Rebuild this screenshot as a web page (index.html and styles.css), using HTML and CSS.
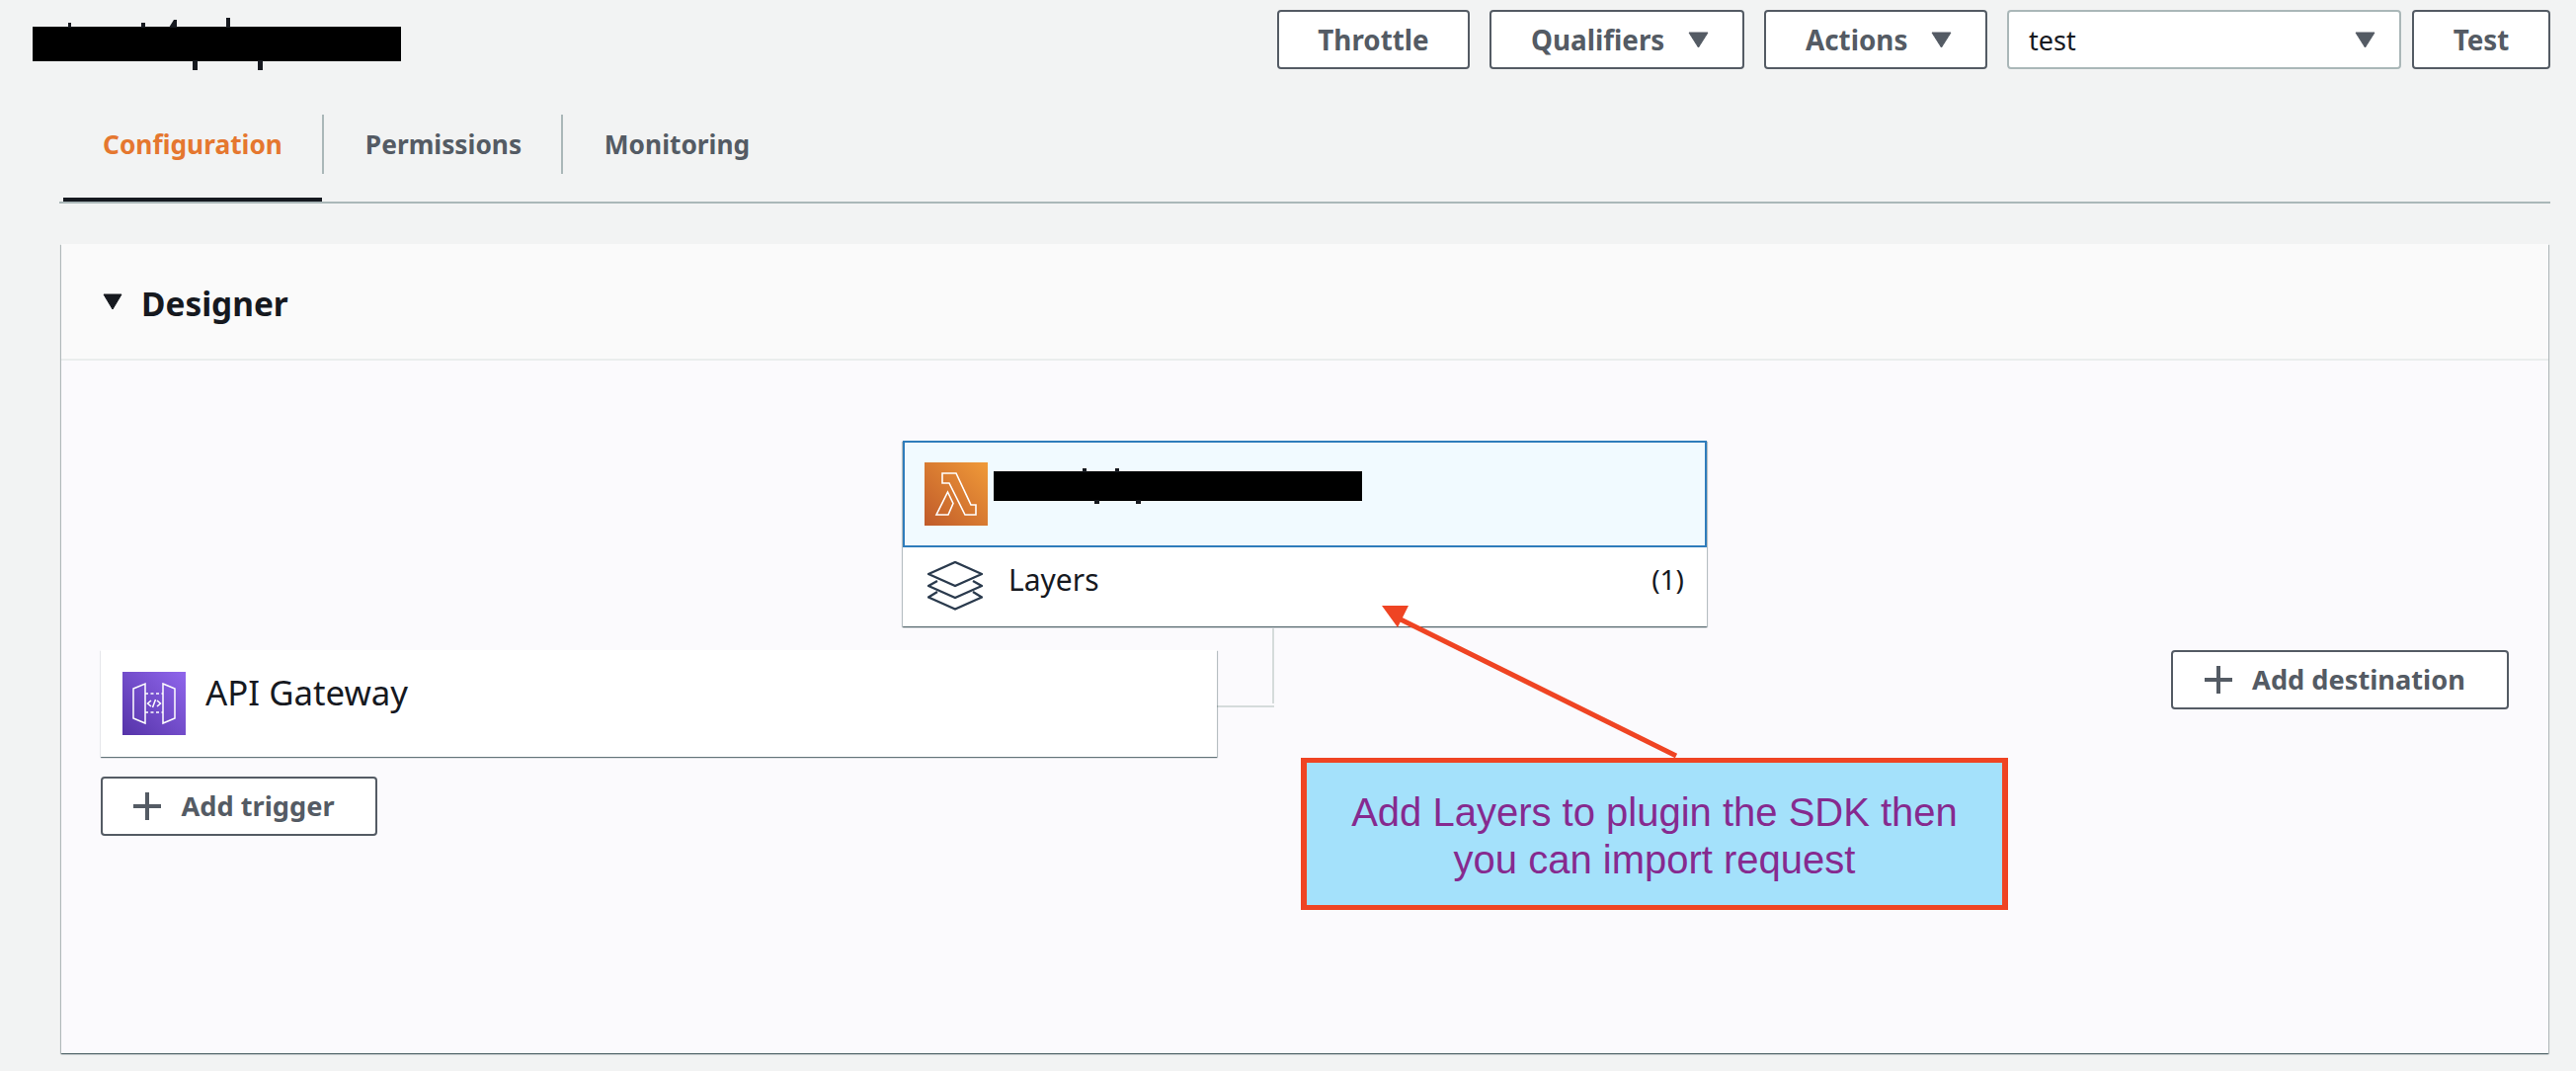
FILE: index.html
```html
<!DOCTYPE html>
<html lang="en">
<head>
<meta charset="utf-8">
<title>Lambda function</title>
<link rel="stylesheet" href="styles.css">
</head>
<body>
<div class="page">
  <header class="topbar">
    <svg class="redact-title" width="373" height="53" viewBox="0 0 373 53" aria-hidden="true">
      <rect x="0" y="9" width="373" height="35" fill="#000"/>
      <path d="M36 5h3v5h-3zM110 5h4v5h-4zM196 0h4v10h-4zM162 43h5v10h-5zM228 43h5v10h-5z" fill="#16191f"/>
      <path d="M138 10l5-8h3v8z" fill="#16191f"/>
    </svg>
    <div class="actions">
      <button class="btn btn-throttle">Throttle</button>
      <button class="btn btn-menu btn-qualifiers">Qualifiers
        <svg class="caret" width="21" height="16" viewBox="0 0 21 16"><path d="M1 1h19l-9.500 15z" fill="#545b64" stroke="#545b64" stroke-linejoin="round"/></svg>
      </button>
      <button class="btn btn-menu btn-actions">Actions
        <svg class="caret" width="21" height="16" viewBox="0 0 21 16"><path d="M1 1h19l-9.500 15z" fill="#545b64" stroke="#545b64" stroke-linejoin="round"/></svg>
      </button>
      <div class="test-group">
        <div class="select">
          <span>test</span>
          <svg class="caret" width="21" height="16" viewBox="0 0 21 16"><path d="M1 1h19l-9.500 15z" fill="#545b64" stroke="#545b64" stroke-linejoin="round"/></svg>
        </div>
        <button class="btn btn-test">Test</button>
      </div>
    </div>
  </header>

  <nav class="tabs">
    <a class="tab tab-config tab-active">Configuration</a>
    <span class="divider"></span>
    <a class="tab tab-perm">Permissions</a>
    <span class="divider"></span>
    <a class="tab tab-mon">Monitoring</a>
  </nav>

  <section class="card">
    <div class="card-head">
      <svg class="head-caret" width="20" height="16" viewBox="0 0 20 16"><path d="M1 1h18l-9 15z" fill="#16191f" stroke="#16191f" stroke-linejoin="round"/></svg>
      <h2 class="card-title">Designer</h2>
    </div>
    <div class="diagram">
      <div class="wire-v"></div>
      <div class="wire-h"></div>

      <div class="node-fn">
        <div class="fn-main">
          <svg class="svc-icon" width="64" height="64" viewBox="0 0 64 64">
            <defs>
              <linearGradient id="lg-orange" x1="0" y1="1" x2="1" y2="0">
                <stop offset="0" stop-color="#c05a2a"/>
                <stop offset="1" stop-color="#f09a38"/>
              </linearGradient>
            </defs>
            <rect width="64" height="64" fill="url(#lg-orange)"/>
            <path d="M18 11H32L47 43H52V53H41L25 21H18ZM23.500 30L29 41.500L24 53H12Z" fill="none" stroke="#fff" stroke-width="1.600"/>
          </svg>
          <svg class="redact-fn" width="373" height="36" viewBox="0 0 373 36" aria-hidden="true">
            <rect x="0" y="3" width="373" height="30" fill="#000"/>
            <path d="M90 0h4v4h-4zM123 0h4v4h-4zM102 32h5v4h-5zM144 32h5v4h-5z" fill="#16191f"/>
          </svg>
        </div>
        <div class="fn-layers">
          <svg class="layers-icon" width="56" height="50" viewBox="0 0 56 50">
            <path d="M28 1L55 13L28 25L1 13Z M10 20L1 25L28 37L55 25L46 20 M10 31L1 36.500L28 48.500L55 36.500L46 31" fill="none" stroke="#2a3a4d" stroke-width="2.400" stroke-linejoin="miter"/>
          </svg>
          <span class="layers-label">Layers</span>
          <span class="layers-count">(1)</span>
        </div>
      </div>

      <div class="node-trigger">
        <svg class="svc-icon" width="64" height="64" viewBox="0 0 64 64">
          <defs>
            <linearGradient id="lg-purple" x1="0" y1="1" x2="1" y2="0">
              <stop offset="0" stop-color="#5533a8"/>
              <stop offset="1" stop-color="#9066ec"/>
            </linearGradient>
          </defs>
          <rect width="64" height="64" fill="url(#lg-purple)"/>
          <path d="M11 17L23 12V52L11 47ZM41 12L53 17V47L41 52Z" fill="none" stroke="#fff" stroke-width="1.500"/>
          <path d="M23 22H41M23 41H41" fill="none" stroke="#fff" stroke-width="1.500" stroke-dasharray="3 2.500"/>
          <path d="M29 29L25.500 32L29 35M35 29L38.500 32L35 35M33.500 28L30.500 36" fill="none" stroke="#fff" stroke-width="1.500"/>
        </svg>
        <span class="trigger-label">API Gateway</span>
      </div>

      <button class="btn-add add-trigger">
        <svg class="plus" width="28" height="28" viewBox="0 0 28 28"><path d="M14 0V28M0 14H28" stroke="#545b64" stroke-width="4"/></svg>
        Add trigger
      </button>
      <button class="btn-add add-dest">
        <svg class="plus" width="28" height="28" viewBox="0 0 28 28"><path d="M14 0V28M0 14H28" stroke="#545b64" stroke-width="4"/></svg>
        Add destination
      </button>
    </div>
  </section>

  <svg class="arrow" width="310" height="160" viewBox="0 0 310 160" aria-hidden="true">
    <path d="M17 14L302 155" fill="none" stroke="#ef4423" stroke-width="5"/>
    <path d="M4 3L31 3L20 25Z" fill="#ef4423"/>
  </svg>
  <div class="callout">Add Layers to plugin the SDK then<br>you can import request</div>
</div>
</body>
</html>
```
FILE: styles.css
```css
* { box-sizing: border-box; }
html, body { margin: 0; padding: 0; height: 100%; overflow: hidden; background: #f2f3f3; }
body { font-family: "Noto Sans", "Open Sans", sans-serif; color: #16191f; }
.page { position: relative; width: 2608px; height: 1084px; }

.topbar { display: flex; justify-content: space-between; align-items: flex-start; padding: 10px 26px 0 33px; height: 70px; }
.redact-title { display: block; margin-top: 8px; }
.actions { display: flex; gap: 20px; }
.test-group { display: flex; gap: 11px; }

.btn { height: 60px; border: 2px solid #545b64; border-radius: 4px; background: #fff; color: #545b64; font: 700 27.800px "Noto Sans", sans-serif; display: flex; align-items: center; justify-content: center; padding: 0; }
.btn-throttle { width: 195px; }
.btn-menu { justify-content: flex-start; padding-left: 40px; gap: 24px; }
.btn-qualifiers { width: 258px; }
.btn-actions { width: 226px; }
.btn-test { width: 140px; }
.caret { display: block; flex: none; }
.select { width: 399px; height: 60px; border: 2px solid #aab7b8; border-radius: 4px; background: #fff; display: flex; align-items: center; justify-content: space-between; padding: 0 24px 0 20px; font-size: 27px; color: #16191f; }

.tabs { display: flex; align-items: flex-start; margin: 46px 26px 0 60px; padding-left: 4px; border-bottom: 2px solid #aab7b8; height: 90px; }
.tab { display: block; height: 88px; padding: 11px 0 0; border-bottom: 4px solid transparent; font-size: 26.300px; font-weight: 700; line-height: 38px; color: #545b64; text-align: center; }
.tab-active { color: #e5772f; border-bottom-color: #16191f; }
.tab-config { width: 262px; }
.tab-perm { width: 240px; padding-left: 2px; }
.tab-mon { width: 231px; }
.divider { flex: none; width: 2px; height: 60px; background: #aab7b8; }

.card { margin: 41px 28px 0 62px; height: 819px; box-shadow: 0 1px 1px 0 rgba(0,28,36,.5), 1px 1px 1px 0 rgba(0,28,36,.2), -1px 1px 1px 0 rgba(0,28,36,.2); display: flex; flex-direction: column; }
.card-head { height: 118px; flex: none; background: #fafafa; border-bottom: 2px solid #eaeded; display: flex; align-items: center; padding-left: 42px; gap: 19px; }
.card-title { margin: 3px 0 0; font-size: 33.400px; font-weight: 700; color: #16191f; }
.diagram { position: relative; flex: 1; background: #fbfafd; }

.node-fn { position: absolute; left: 852px; top: 81px; width: 814px; height: 188px; background: #fff; box-shadow: 0 1px 1px 0 rgba(0,28,36,.5), 1px 1px 1px 0 rgba(0,28,36,.2), -1px 1px 1px 0 rgba(0,28,36,.2); }
.fn-main { height: 108px; background: #f1faff; border: 2px solid #2f7cbb; display: flex; align-items: center; padding-left: 20px; gap: 6px; }
.svc-icon { display: block; flex: none; }
.redact-fn { display: block; margin-top: -16px; }
.fn-layers { display: flex; align-items: center; height: 78px; padding: 0 23px 0 25px; font-size: 30px; color: #16191f; }
.layers-icon { display: block; flex: none; margin-right: 26px; }
.layers-label { flex: 1; margin-top: -14px; }
.layers-count { font-size: 28px; margin-top: -14px; }

.node-trigger { position: absolute; left: 40px; top: 293px; width: 1130px; height: 108px; background: #fff; box-shadow: 0 1px 1px 0 rgba(0,28,36,.5), 1px 1px 1px 0 rgba(0,28,36,.2); display: flex; align-items: center; padding: 0 0 0 22px; gap: 20px; }
.trigger-label { font-size: 34.800px; color: #16191f; margin-top: -24px; }

.wire-v { position: absolute; left: 1226px; top: 271px; width: 2px; height: 76px; background: #d5dbdb; }
.wire-h { position: absolute; left: 1170px; top: 349px; width: 58px; height: 2px; background: #d5dbdb; }

.btn-add { position: absolute; height: 60px; background: #fff; border: 2px solid #545b64; border-radius: 4px; color: #545b64; font: 700 27.200px "Noto Sans", sans-serif; line-height: 36px; display: flex; align-items: center; justify-content: center; gap: 20px; padding: 0 10px 0 0; }
.plus { display: block; flex: none; }
.add-trigger { left: 40px; top: 421px; width: 280px; }
.add-dest { left: 2136px; top: 293px; width: 342px; }

.arrow { position: absolute; left: 1395px; top: 610px; display: block; }
.callout { position: absolute; left: 1317px; top: 767px; width: 716px; height: 154px; background: #a4e1fb; border: solid #ef4423; border-width: 5px 6px; color: #862a8f; font: 40px/48px "Liberation Sans", Arial, sans-serif; text-align: center; padding-top: 26px; }
```
